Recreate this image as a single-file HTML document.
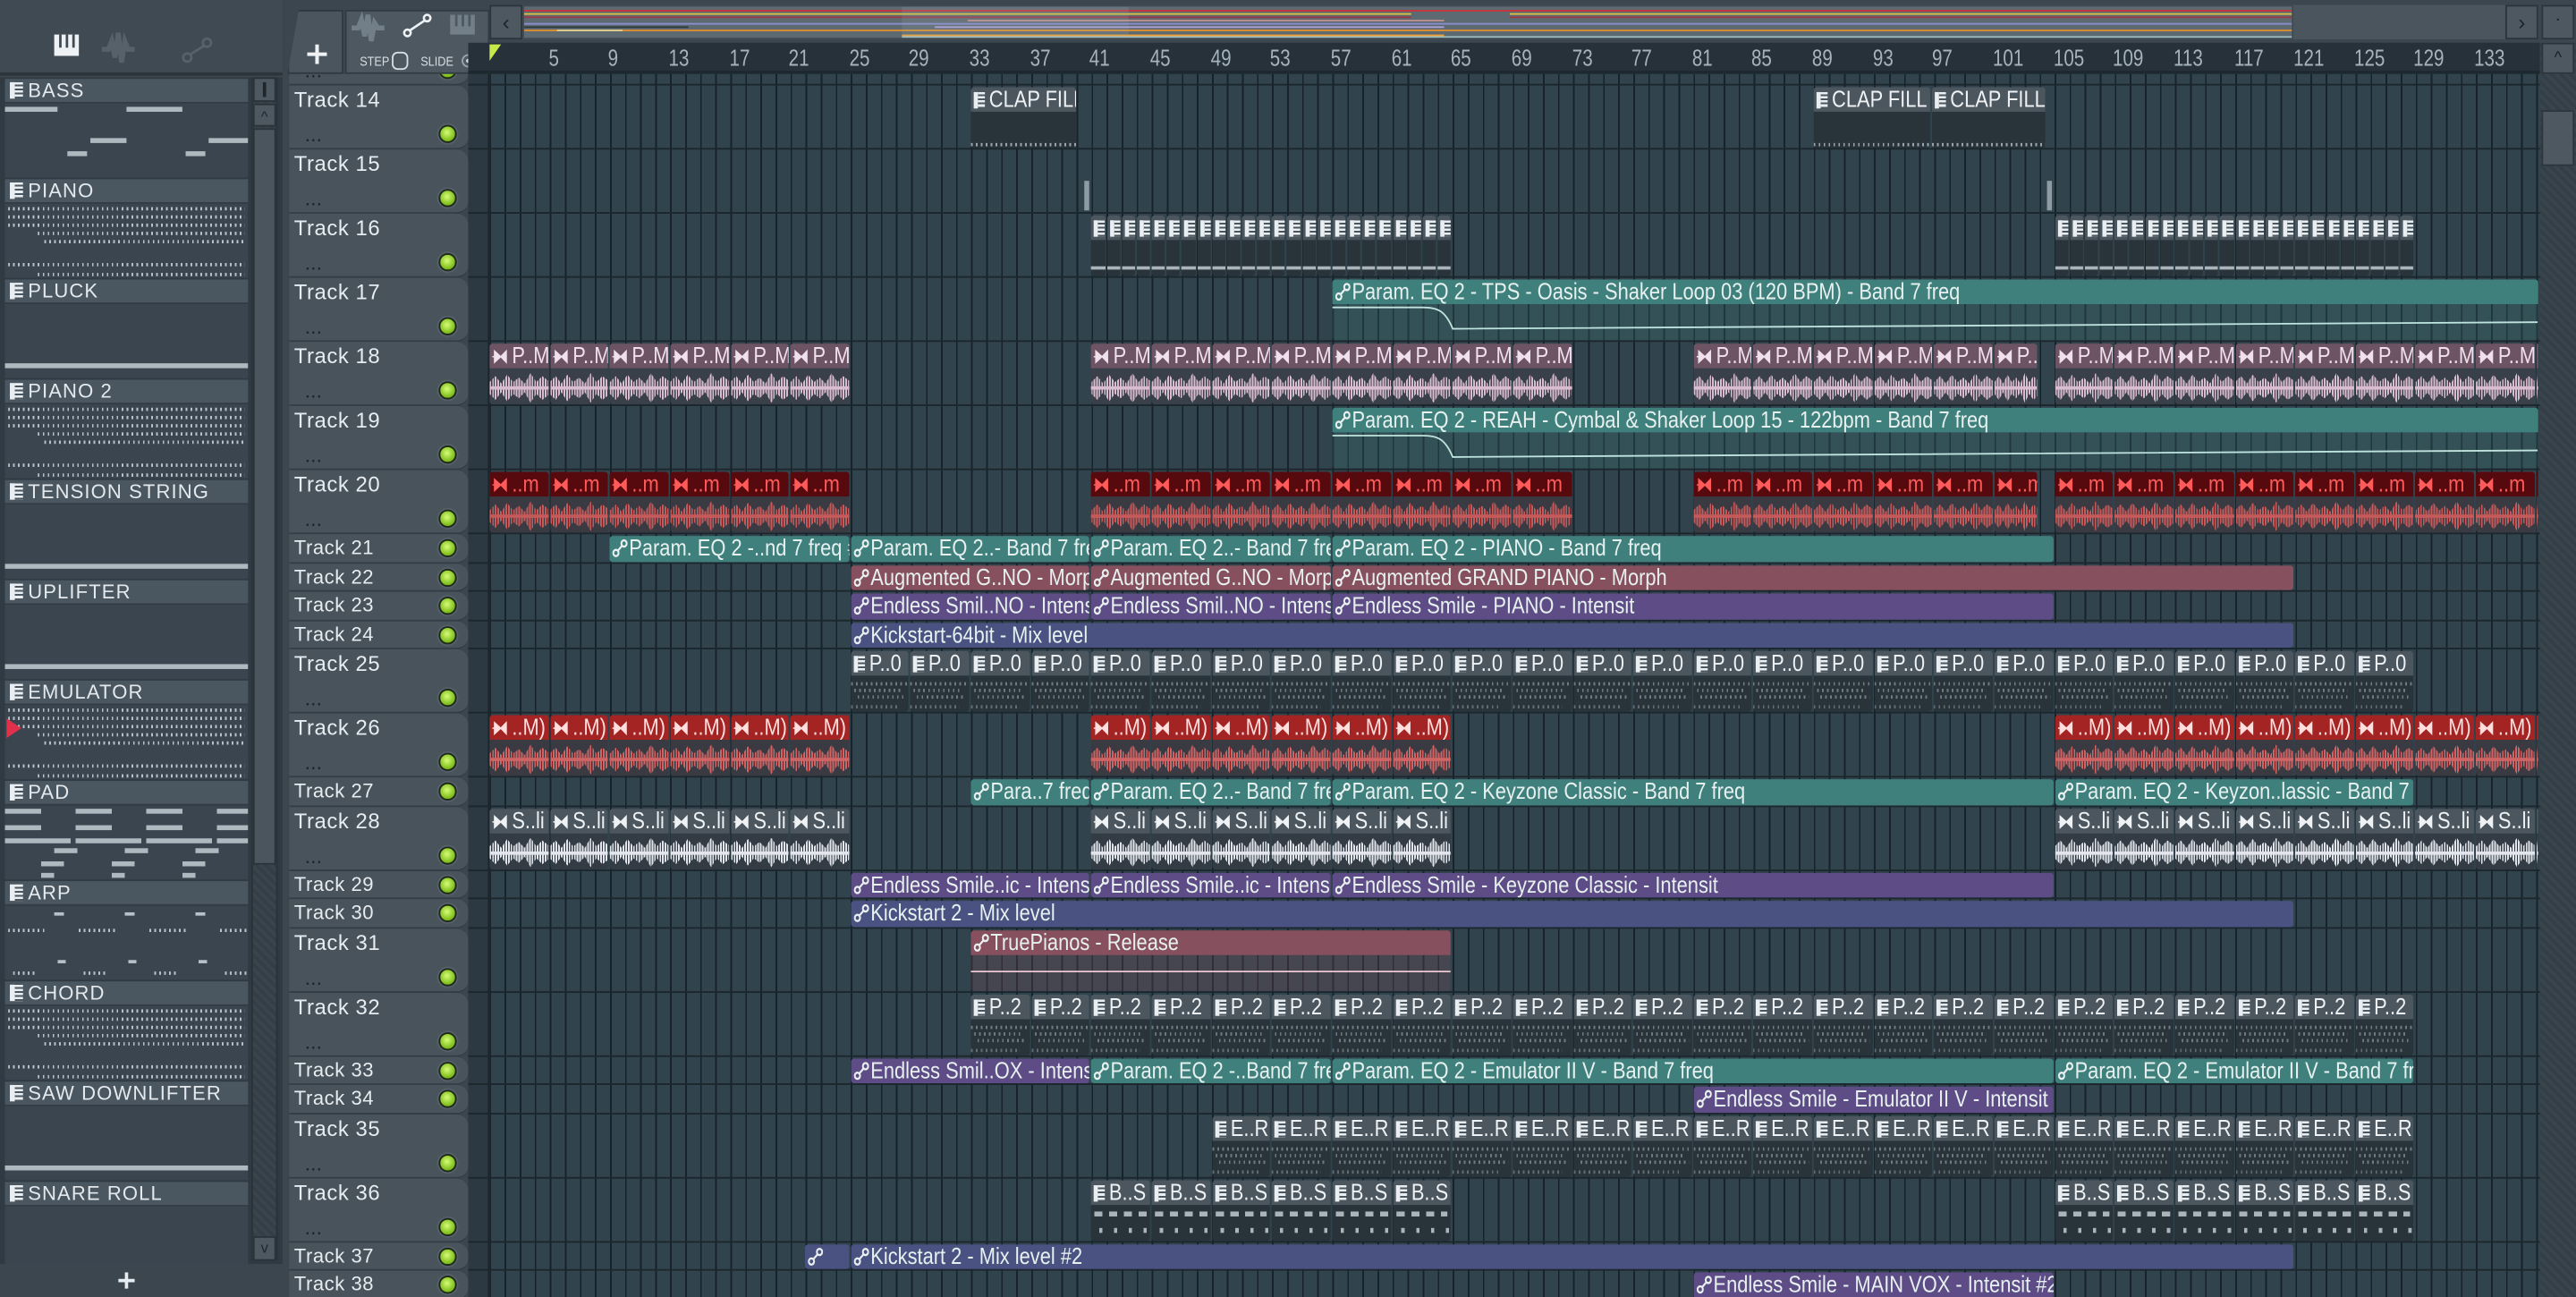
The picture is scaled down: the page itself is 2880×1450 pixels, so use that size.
<!DOCTYPE html>
<html><head><meta charset="utf-8">
<style>
*{box-sizing:border-box;margin:0;padding:0}
html,body{width:2880px;height:1450px;overflow:hidden;background:#3a444c}
#s{position:absolute;left:0;top:0;width:1568px;height:789px;transform-origin:0 0;transform:scale(1.83673,1.83777);background:#3b464f;font-family:"Liberation Sans Narrow","Liberation Sans",sans-serif;color:#dde5ea}
.a{position:absolute}
.lbl{position:absolute;white-space:nowrap;overflow:hidden}
.trk{position:absolute;left:176px;width:109px;background:#48535c;border-radius:0 7px 7px 0;border-bottom:1px solid #333d45}
.trk .n{position:absolute;left:3px;top:1px;font-family:"Liberation Sans",sans-serif;font-size:13px;color:#e6ecef;letter-spacing:.3px}
.trk.sm .n{font-size:12px;top:1px}
.trk .d{position:absolute;left:10px;bottom:2px;font-size:9px;color:#1f272d;letter-spacing:1px;font-weight:bold}
.dot{position:absolute;right:7px;width:11px;height:11px;border-radius:50%;background:radial-gradient(circle at 45% 40%,#d6fb7a,#8cc928 55%,#5a8f12);border:1px solid #1e2a17;box-shadow:0 0 0 1px #56606a}
.clip{position:absolute;overflow:hidden;border-radius:2px}
.hd{position:absolute;left:0;right:-18%;top:0;height:15px;font-size:14px;line-height:15px;padding-left:2px;white-space:nowrap;overflow:hidden;border-radius:2px;transform:scaleX(.85);transform-origin:0 0}
.pi{display:inline-block;width:8px;height:10px;vertical-align:-1px;margin-right:3px;background:repeating-linear-gradient(180deg,#e8eef2 0 1.4px,#4c565e 1.4px 2.5px);border-left:3px solid #e8eef2}
.lp{position:absolute;left:3px;width:148px}
.lp .h{height:15px;background:#4a5660;border-bottom:1px solid #323c44;font-size:12px;line-height:15px;padding-left:3px;font-family:"Liberation Sans",sans-serif;letter-spacing:.6px;color:#e3e9ed;white-space:nowrap;overflow:hidden}
.lp .b{height:45px;background:#3a4550;position:relative;overflow:hidden}
.nb{position:absolute;background:#aeb8bf;height:3px}
.dt{position:absolute;height:2px;background:repeating-linear-gradient(90deg,#b8c1c8 0 1px,transparent 1px 3px)}
</style></head><body>
<div id="s">
 <div class="a" style="left:0;top:0;width:172px;height:46px;background:#3f4a53;border-bottom:2px solid #2c353c"></div>
 <svg class="a" style="left:0;top:0" width="172" height="46">
  <g fill="#eef2f4"><rect x="33" y="21" width="15" height="13"/></g>
  <g fill="#3f4a53"><rect x="36" y="21" width="1.5" height="8"/><rect x="40" y="21" width="1.5" height="8"/><rect x="44" y="21" width="1.5" height="8"/></g>
  <path d="M62 30 L66 30 L68 25 L70 35 L72 20 L74 38 L76 25 L78 30 L82 30" stroke="#56616a" stroke-width="3" fill="none"/>
  <g stroke="#56616a" stroke-width="1.5" fill="none"><circle cx="114" cy="35" r="2.5"/><circle cx="126" cy="26" r="2.5"/><line x1="116" y1="33" x2="124" y2="28"/></g>
 </svg>
 <div class="a" style="left:0;top:47px;width:172px;height:722px;background:#2f3a42"></div>
 <div class="a" style="left:153px;top:47px;width:16px;height:720px;background:repeating-linear-gradient(45deg,#3a444c 0 2px,#343e46 2px 4px);border:1px solid #2a3339"></div>
 <div class="a" style="left:154px;top:47px;width:14px;height:15px;background:#4d5861;border:1px solid #2a3339"></div>
 <div class="a" style="left:160px;top:50px;width:2px;height:9px;background:#1f272d"></div>
 <div class="a" style="left:154px;top:63px;width:14px;height:14px;background:#4d5861;border:1px solid #2a3339;font-size:9px;text-align:center;color:#1f272d;line-height:14px">^</div>
 <div class="a" style="left:154px;top:78px;width:14px;height:448px;background:#4a555e;border:1px solid #2a3339"></div>
 <div class="a" style="left:154px;top:752px;width:14px;height:15px;background:#4d5861;border:1px solid #2a3339;font-size:9px;text-align:center;color:#1f272d;line-height:13px">v</div>
 <div id="lp"></div>
 <div class="a" style="left:0;top:769px;width:172px;height:20px;background:#3b464f"></div>
 <svg class="a" style="left:72px;top:774px" width="10" height="10"><path d="M5 0V10M0 5H10" stroke="#e6ecef" stroke-width="2"/></svg>
 <div class="a" style="left:4px;top:437px;width:0;height:0;border-top:6px solid transparent;border-bottom:6px solid transparent;border-left:9px solid #e0304a"></div>

 <div class="a" style="left:172px;top:0;width:1396px;height:45px;background:#3b464f"></div>
 <div class="a" style="left:175px;top:6px;width:34px;height:39px;background:#4a555e;border:1px solid #2f383f;clip-path:polygon(20% 0,100% 0,100% 100%,0 100%)"></div>
 <svg class="a" style="left:187px;top:27px" width="12" height="12"><path d="M6 0V12M0 6H12" stroke="#eef2f4" stroke-width="2.2"/></svg>
 <div class="a" style="left:210px;top:6px;width:88px;height:39px;background:#4d5861;border:1px solid #323b42"></div>
 <svg class="a" style="left:210px;top:6px" width="88" height="39">
  <path d="M4 11 L8 11 L10 6 L12 16 L14 3 L16 19 L18 8 L20 11 L24 11" stroke="#737f88" stroke-width="3" fill="none"/>
  <g stroke="#eef2f4" stroke-width="1.4" fill="none"><circle cx="38" cy="14" r="2"/><circle cx="50" cy="5" r="2"/><line x1="39.5" y1="12.5" x2="48.5" y2="6.5"/></g>
  <rect x="64" y="3" width="15" height="12" fill="#737f88"/><g fill="#4d5861"><rect x="67" y="3" width="1.5" height="7"/><rect x="71" y="3" width="1.5" height="7"/><rect x="75" y="3" width="1.5" height="7"/></g>
  <text x="9" y="34" font-size="8" fill="#d6dde2" font-family="Liberation Sans" textLength="18" lengthAdjust="spacingAndGlyphs">STEP</text>
  <rect x="29" y="26" width="9" height="10" rx="3" fill="none" stroke="#d6dde2" stroke-width="1"/>
  <text x="46" y="34" font-size="8" fill="#d6dde2" font-family="Liberation Sans" textLength="20" lengthAdjust="spacingAndGlyphs">SLIDE</text>
  <circle cx="75" cy="31" r="3.5" fill="none" stroke="#9aa5ad"/><circle cx="75" cy="31" r="1.3" fill="#d6dde2"/>
 </svg>
 <div class="a" style="left:298px;top:3px;width:20px;height:21px;background:#4d5861;border:1px solid #2c353c;font-size:13px;line-height:19px;text-align:center;color:#1c2328">&lsaquo;</div>
 <div id="ov" class="a" style="left:318px;top:3px;width:1078px;height:21px;background:#5e6a72;border:1px solid #3f4a52;overflow:hidden"></div>
 <div class="a" style="left:1396px;top:3px;width:129px;height:21px;background:#4a555e"></div>
 <div class="a" style="left:1525px;top:3px;width:20px;height:21px;background:#4d5861;border:1px solid #2c353c;font-size:13px;line-height:19px;text-align:center;color:#1c2328">&rsaquo;</div>
 <div class="a" style="left:1547px;top:3px;width:20px;height:21px;background:#4d5861;border:1px solid #2c353c;font-size:11px;line-height:17px;text-align:center;color:#1c2328">&middot;</div>
 <div id="ru" class="a" style="left:285px;top:26px;width:1261px;height:19px;background:#26313a;border-bottom:2px solid #1e282f"></div>
 <div class="a" style="left:298px;top:27px;width:0;height:0;border-top:10px solid #c7ea4a;border-right:7px solid transparent"></div>
 <div class="a" style="left:1546px;top:26px;width:22px;height:763px;background:repeating-linear-gradient(45deg,#3a444c 0 2px,#343e46 2px 4px)"></div>
 <div class="a" style="left:1547px;top:26px;width:20px;height:19px;background:#4d5861;border:1px solid #2c353c;font-size:10px;text-align:center;line-height:17px;color:#1c2328">^</div>
 <div class="a" style="left:1547px;top:67px;width:20px;height:34px;background:#4d5861;border:1px solid #2c353c"></div>

 <div id="pl" class="a" style="left:0;top:45px;width:1546px;height:744px;overflow:hidden">
  <div class="a" style="left:285px;top:0;width:13px;height:744px;background:#2c3942;border-right:1px solid #1a242b"></div>
  <div id="gr" class="a" style="left:298px;top:0;width:1248px;height:744px;background-color:#31434d;background-image:repeating-linear-gradient(90deg,#17222a 0 1px,transparent 1px 9.16px)"></div>
  <div id="tr"></div>
 </div>
</div>
<script>
const W=9.16,X=b=>298+(b-1)*W;
const T=39,S=17.5;
const rows={};let y=7-39;
rows[13]={t:y,h:T};y=7;
const kinds={14:T,15:T,16:T,17:T,18:T,19:T,20:T,21:S,22:S,23:S,24:S,25:T,26:T,27:S,28:T,29:S,30:S,31:T,32:T,33:S,34:S,35:T,36:T,37:S,38:S};
for(let r=14;r<=38;r++){rows[r]={t:y,h:kinds[r]};y+=kinds[r];}
const tr=document.getElementById('tr');let h='';
for(const r in rows){const o=rows[r];
 h+=`<div class="a" style="left:285px;top:${o.t+o.h-1}px;width:1261px;height:1px;background:#1b262d"></div>`;
 const sm=o.h<20;
 h+=`<div class="trk${sm?' sm':''}" style="top:${o.t}px;height:${o.h}px"><div class="n">Track ${r}</div>${sm?'':'<div class="d">...</div>'}<div class="dot" style="${sm?'top:3px':'bottom:3px'}"></div></div>`;
}
const AI='<svg width="11" height="11" style="vertical-align:-1px;margin-right:1px"><g stroke="#e8f0f0" stroke-width="1.3" fill="none"><circle cx="2.6" cy="8.4" r="1.9"/><circle cx="8.4" cy="2.6" r="1.9"/><line x1="3.9" y1="7.1" x2="7.1" y2="3.9"/></g></svg>';
const AU=c=>`<svg width="11" height="10" style="vertical-align:-1px;margin-right:3px"><path d="M0 5H4.5M1.5 1.5L6 5L1.5 8.5Z M10 1.5L6 5L10 8.5Z" fill="${c}" stroke="${c}" stroke-width="0.8"/></svg>`;
const PI='<span class="pi"></span>';
function clip(r,a,b,html,style){const o=rows[r];h+=`<div class="clip" style="left:${X(a)}px;top:${o.t+1}px;width:${X(b)-X(a)-1}px;height:${o.h-2}px;${style}">${html}</div>`;}
const AC={te:['#3f807d','rgba(70,130,128,.22)'],ro:['#87505f','rgba(135,80,95,.25)'],pu:['#5d4c85','rgba(93,76,133,.25)'],in:['#4a5282','rgba(74,82,130,.25)']};
function auto(r,a,b,c,label,curve){const o=rows[r],k=AC[c];
 if(o.h<20){clip(r,a,b,`<div class="a" style="left:0;right:0;top:0;bottom:0;background:${k[0]}"></div><div class="hd" style="height:100%;color:#e6f0ef">${AI}${label}</div>`,'');}
 else{const w=X(b)-X(a)-1;let sv='';
  if(curve==1)sv=`<svg class="a" style="left:0;top:15px" width="${w}" height="22"><path d="M0 2 H${W*6} C${W*7} 2 ${W*7.5} 4 ${W*8} 15 L${w} 11" stroke="#bfe4de" stroke-width="1" fill="none"/></svg>`;
  if(curve==2)sv=`<svg class="a" style="left:0;top:15px" width="${w}" height="22"><path d="M0 10 H${w}" stroke="#f0c8d4" stroke-width="1" fill="none"/></svg>`;
  clip(r,a,b,`<div class="a" style="left:0;right:0;top:0;bottom:0;background:${k[1]}"></div><div class="a" style="left:0;right:0;top:0;height:15px;background:${k[0]}"></div><div class="hd" style="color:#e6f0ef">${AI}${label}</div>${sv}`,'');}
}
const AD={mv:['#6d5465','#f0e0ec','#d9bcd0','#3a404a'],dr:['#560a0e','#ff5a5a','#c65a5a','#3a3a42'],rd:['#a42424','#ffdede','#d06464','#3a3a42'],gy:['#4c565e','#eef2f4','#e2e6ec','#333c45']};
function audio(r,a,b,c,lab){const k=AD[c];
 for(let s=a;s<b-0.01;s+=4){const e=Math.min(s+4,b);
  clip(r,s,e,`<div class="a" style="left:0;right:0;top:15px;bottom:0;background:${k[3]}"></div><div class="a" style="left:0;right:0;top:0;height:15px;background:${k[0]}"></div><div class="hd" style="color:${k[1]}">${AU(k[1])}${lab}</div><div class="a" style="left:0;right:0;top:18px;height:18px;background:repeating-linear-gradient(90deg,${k[2]} 0 1px,transparent 1px 1.6px);clip-path:polygon(0 30%,10% 10%,20% 35%,30% 5%,40% 30%,50% 15%,60% 35%,70% 0,80% 30%,90% 10%,100% 25%,100% 75%,90% 90%,80% 70%,70% 100%,60% 65%,50% 85%,40% 70%,30% 95%,20% 65%,10% 90%,0 70%)"></div><div class="a" style="left:0;right:0;top:26px;height:2px;background:${k[2]}"></div>`,'');}
}
function pat(r,a,b,step,lab,body){
 for(let s=a;s<b-0.01;s+=step){const e=Math.min(s+step,b);
  clip(r,s,e,`<div class="a" style="left:0;right:0;top:15px;bottom:0;background:#28333a"></div><div class="a" style="left:0;right:0;top:0;height:15px;background:#4c565e"></div><div class="hd" style="color:#eef2f4">${PI}${lab}</div>${body||''}`,'');}
}
const dotsBody='<div class="dt" style="left:0;right:0;top:19px;opacity:.5"></div><div class="dt" style="left:2px;right:4px;top:23px;opacity:.5"></div><div class="dt" style="left:4px;right:2px;top:27px;opacity:.5"></div><div class="dt" style="left:0;right:6px;top:33px;opacity:.4"></div>';
pat(14,33,40.1,7.1,'CLAP FILL','<div class="dt" style="left:0;right:0;bottom:1px;opacity:.8"></div>');
pat(14,89,96.9,7.9,'CLAP FILL','<div class="dt" style="left:0;right:0;bottom:1px;opacity:.8"></div>');
pat(14,96.9,104.5,7.6,'CLAP FILL','<div class="dt" style="left:0;right:0;bottom:1px;opacity:.8"></div>');
h+=`<div class="a" style="left:${X(40.5)}px;top:${rows[15].t+19}px;width:3px;height:18px;background:#8f9ba3"></div><div class="a" style="left:${X(104.5)}px;top:${rows[15].t+19}px;width:3px;height:18px;background:#8f9ba3"></div>`;
pat(16,41,65,1,'','<div class="a" style="left:0;right:0;bottom:4px;height:2px;background:#aab4bb"></div>');
pat(16,105,129,1,'','<div class="a" style="left:0;right:0;bottom:4px;height:2px;background:#aab4bb"></div>');
auto(17,57,137.2,'te','Param. EQ 2 - TPS - Oasis - Shaker Loop 03 (120 BPM) - Band 7 freq',1);
audio(18,1,25,'mv','P..M');audio(18,41,73,'mv','P..M');audio(18,81,104,'mv','P..M');audio(18,105,137.2,'mv','P..M');
auto(19,57,137.2,'te','Param. EQ 2 - REAH - Cymbal &amp; Shaker Loop 15 - 122bpm - Band 7 freq',1);
audio(20,1,25,'dr','..m');audio(20,41,73,'dr','..m');audio(20,81,104,'dr','..m');audio(20,105,137.2,'dr','..m');
auto(21,9,25,'te','Param. EQ 2 -..nd 7 freq #2');auto(21,25,41,'te','Param. EQ 2..- Band 7 freq');auto(21,41,57,'te','Param. EQ 2..- Band 7 freq');auto(21,57,105,'te','Param. EQ 2 - PIANO - Band 7 freq');
auto(22,25,41,'ro','Augmented G..NO - Morph');auto(22,41,57,'ro','Augmented G..NO - Morph');auto(22,57,121,'ro','Augmented GRAND PIANO - Morph');
auto(23,25,41,'pu','Endless Smil..NO - Intensit');auto(23,41,57,'pu','Endless Smil..NO - Intensit');auto(23,57,105,'pu','Endless Smile - PIANO - Intensit');
auto(24,25,121,'in','Kickstart-64bit - Mix level');
pat(25,25,129,4,'P..0',dotsBody);
audio(26,1,25,'rd','..M)');audio(26,41,65,'rd','..M)');audio(26,105,137.2,'rd','..M)');
auto(27,33,41,'te','Para..7 freq');auto(27,41,57,'te','Param. EQ 2..- Band 7 freq');auto(27,57,105,'te','Param. EQ 2 - Keyzone Classic - Band 7 freq');auto(27,105,129,'te','Param. EQ 2 - Keyzon..lassic - Band 7 freq');
audio(28,1,25,'gy','S..li');audio(28,41,65,'gy','S..li');audio(28,105,137.2,'gy','S..li');
auto(29,25,41,'pu','Endless Smile..ic - Intensit');auto(29,41,57,'pu','Endless Smile..ic - Intensit');auto(29,57,105,'pu','Endless Smile - Keyzone Classic - Intensit');
auto(30,25,121,'in','Kickstart 2 - Mix level');
auto(31,33,65,'ro','TruePianos - Release',2);
pat(32,33,129,4,'P..2',dotsBody);
auto(33,25,41,'pu','Endless Smil..OX - Intensit');auto(33,41,57,'te','Param. EQ 2 -..Band 7 freq');auto(33,57,105,'te','Param. EQ 2 - Emulator II V - Band 7 freq');auto(33,105,129,'te','Param. EQ 2 - Emulator II V - Band 7 freq');
auto(34,81,105,'pu','Endless Smile - Emulator II V - Intensit');
pat(35,49,129,4,'E..R',dotsBody);
const bs='<div class="a" style="left:2px;right:2px;top:19px;height:3px;background:repeating-linear-gradient(90deg,#aab4bb 0 5px,transparent 5px 9px)"></div><div class="a" style="left:1px;right:1px;top:29px;height:3px;background:repeating-linear-gradient(90deg,transparent 0 4px,#aab4bb 4px 6px,transparent 6px 9px)"></div>';
pat(36,41,65,4,'B..S',bs);pat(36,105,129,4,'B..S',bs);
auto(37,22,25,'in','');auto(37,25,121,'in','Kickstart 2 - Mix level #2');
auto(38,81,105,'pu','Endless Smile - MAIN VOX - Intensit #2');
tr.innerHTML=h;
let rh='';for(let b=5;b<=133;b+=4){rh+=`<div class="lbl" style="left:${X(b)-285-1}px;top:1px;font-size:14px;color:#a6b3bc;transform:scaleX(.8);transform-origin:0 0">${b}</div>`;}
document.getElementById('ru').innerHTML=rh;
const ovc=[['#c8343a',2,0,1078],['#d8c040',5,0,540],['#d8c040',5,600,1078],['#9a3a48',8,0,540],['#9a3a48',8,600,1078],['#8a8fd0',13,0,1078],['#b0a0d8',16,250,560],['#e09030',19,0,1078],['#f0a030',22,230,560],['#a0c0c0',24,230,1078],['#c09090',11,270,560],['#303840',16,0,100],['#e0d090',19,20,60]];
let oh='';for(const c of ovc){oh+=`<div class="a" style="left:${c[2]}px;top:${c[1]*0.75}px;width:${c[3]-c[2]}px;height:1px;background:${c[0]}"></div>`;}
oh+='<div class="a" style="left:230px;top:0;width:138px;height:21px;background:rgba(160,180,190,.15)"></div>';
document.getElementById('ov').innerHTML=oh;
const names=['BASS','PIANO','PLUCK','PIANO 2','TENSION STRING','UPLIFTER','EMULATOR','PAD','ARP','CHORD','SAW DOWNLIFTER','SNARE ROLL'];
let lh='';names.forEach((n,i)=>{let body='';
 if(n=='BASS')body='<div class="nb" style="left:0;top:2px;width:32px"></div><div class="nb" style="left:74px;top:2px;width:34px"></div><div class="nb" style="left:52px;top:21px;width:22px"></div><div class="nb" style="left:124px;top:21px;width:24px"></div><div class="nb" style="left:38px;top:29px;width:12px"></div><div class="nb" style="left:110px;top:29px;width:12px"></div>';
 else if(['PIANO','PIANO 2','EMULATOR','CHORD'].includes(n))body='<div class="dt" style="left:2px;right:2px;top:2px"></div><div class="dt" style="left:2px;right:2px;top:7px"></div><div class="dt" style="left:2px;right:2px;top:12px"></div><div class="dt" style="left:20px;right:2px;top:17px"></div><div class="dt" style="left:24px;right:2px;top:22px"></div><div class="dt" style="left:2px;right:2px;top:36px"></div><div class="dt" style="left:20px;right:2px;top:42px"></div>';
 else if(n=='PAD')body='<div class="nb" style="left:0;top:2px;width:148px;background:repeating-linear-gradient(90deg,#aeb8bf 0 22px,transparent 22px 43px)"></div><div class="nb" style="left:0;top:12px;width:148px;background:repeating-linear-gradient(90deg,#aeb8bf 0 22px,transparent 22px 43px)"></div><div class="nb" style="left:0;top:20px;width:148px;background:repeating-linear-gradient(90deg,#aeb8bf 0 40px,transparent 40px 43px)"></div><div class="nb" style="left:30px;top:26px;width:118px;background:repeating-linear-gradient(90deg,#aeb8bf 0 14px,transparent 14px 43px)"></div><div class="nb" style="left:22px;top:34px;width:126px;background:repeating-linear-gradient(90deg,#aeb8bf 0 14px,transparent 14px 43px)"></div><div class="nb" style="left:22px;top:41px;width:126px;background:repeating-linear-gradient(90deg,#aeb8bf 0 8px,transparent 8px 43px)"></div>';
 else if(n=='ARP')body='<div class="dt" style="left:30px;width:118px;top:4px;background:repeating-linear-gradient(90deg,#b8c1c8 0 6px,transparent 6px 43px)"></div><div class="dt" style="left:2px;width:146px;top:14px;background:repeating-linear-gradient(90deg,#b8c1c8 0 1px,transparent 1px 3px,#b8c1c8 3px 4px,transparent 4px 6px,#b8c1c8 6px 7px,transparent 7px 9px,#b8c1c8 9px 10px,transparent 10px 12px,#b8c1c8 12px 13px,transparent 13px 15px,#b8c1c8 15px 16px,transparent 16px 18px,#b8c1c8 18px 19px,transparent 19px 21px,#b8c1c8 21px 22px,transparent 22px 43px)"></div><div class="dt" style="left:32px;width:116px;top:33px;background:repeating-linear-gradient(90deg,#b8c1c8 0 5px,transparent 5px 43px)"></div><div class="dt" style="left:5px;width:143px;top:40px;background:repeating-linear-gradient(90deg,#b8c1c8 0 1px,transparent 1px 3px,#b8c1c8 3px 4px,transparent 4px 6px,#b8c1c8 6px 7px,transparent 7px 9px,#b8c1c8 9px 10px,transparent 10px 12px,#b8c1c8 12px 13px,transparent 13px 43px)"></div>';
 else if(['PLUCK','TENSION STRING','UPLIFTER','SAW DOWNLIFTER'].includes(n))body='<div class="nb" style="left:0;right:0;top:36px"></div>';
 lh+=`<div class="lp" style="top:${48+i*61}px"><div class="h">${PI}${n}</div><div class="b">${body}</div></div>`;});
document.getElementById('lp').innerHTML=lh;
</script>
</body></html>
